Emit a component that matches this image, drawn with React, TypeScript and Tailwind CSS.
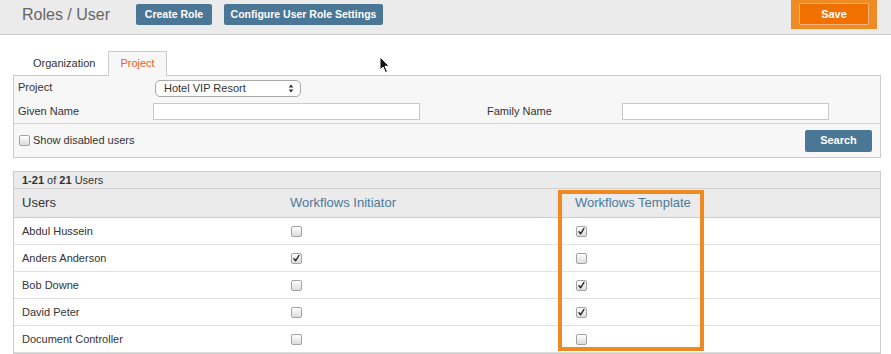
import React from "react";

function Box({ checked = false }: { checked?: boolean }) {
  return (
    <span className="relative inline-block w-[11px] h-[11px] rounded-[2px] border border-[#a3a3a3] bg-gradient-to-b from-[#ffffff] to-[#dcdcdc] shadow-[inset_0_1px_0_#fff]">
      {checked && (
        <svg viewBox="0 0 11 11" className="absolute left-[-1px] top-[-1px] w-[11px] h-[11px]">
          <path d="M3 5.8 L4.6 7.8 L8 2.4" fill="none" stroke="#2a2a2a" strokeWidth="1.4" strokeLinecap="round" strokeLinejoin="round" />
        </svg>
      )}
    </span>
  );
}

const rows: { name: string; init: boolean; tmpl: boolean }[] = [
  { name: "Abdul Hussein", init: false, tmpl: true },
  { name: "Anders Anderson", init: true, tmpl: false },
  { name: "Bob Downe", init: false, tmpl: true },
  { name: "David Peter", init: false, tmpl: true },
  { name: "Document Controller", init: false, tmpl: false },
];

export default function App() {
  return (
    <div
      className="relative w-[891px] h-[354px] overflow-hidden bg-white text-[#333]"
      style={{ fontFamily: '"Liberation Sans", Arial, Helvetica, sans-serif' }}
    >
      {/* Header */}
      <div className="h-[35px] border-b border-[#cfcfcf] bg-[#ebebeb] flex items-start">
        <div className="w-[136px] pl-[22px] pt-[5px] text-[16px] leading-[19px] text-[#666]">Roles / User</div>
        <div className="mt-[4px] w-[76px] h-[21px] rounded-[2px] bg-[#4b7797] text-white text-[10.5px] font-bold flex items-center justify-center">
          Create Role
        </div>
        <div className="ml-[12px] mt-[4px] w-[159px] h-[21px] rounded-[2px] bg-[#4b7797] text-white text-[10.5px] font-bold flex items-center justify-center">
          Configure User Role Settings
        </div>
        <div className="ml-auto mr-[14px] w-[86px] h-[29px] bg-[#f08a22] flex items-center justify-center">
          <div className="w-[70px] h-[22px] mt-[-1px] rounded-[2px] border border-[#f6b47a] bg-[#f07000] text-white text-[11px] font-bold flex items-center justify-center">
            Save
          </div>
        </div>
      </div>

      {/* Tabs */}
      <div className="flex items-end pl-[22px] pt-[16px] gap-[2px]">
        <div className="h-[24px] px-[11px] flex items-center text-[11px] text-[#333]">Organization</div>
        <div className="relative z-10 -mb-px h-[25px] px-[11px] pb-px flex items-center border border-b-0 border-[#cccccc] bg-[#f7f7f7] text-[11px] text-[#f0592a]">
          Project
        </div>
      </div>

      {/* Filter panel */}
      <div className="ml-[13px] w-[868px] border border-[#cccccc] bg-[#f7f7f7] text-[11px]">
        <div className="h-[23px] flex items-center pl-[4px]">
          <div className="w-[136px]">Project</div>
          <div className="ml-[1px] w-[146px] h-[17px] mt-[1px] rounded-[5px] border border-[#a9a9a9] bg-white flex items-center pl-[8px] pr-[6px]">
            <span className="flex-1">Hotel VIP Resort</span>
            <svg viewBox="0 0 6 10" className="w-[6px] h-[9px]">
              <path d="M3 0.5 L5.6 4 L0.4 4 Z M3 9.5 L5.6 6 L0.4 6 Z" fill="#333" />
            </svg>
          </div>
        </div>
        <div className="h-[24px] flex items-center pl-[4px]">
          <div className="w-[135px]">Given Name</div>
          <div className="w-[267px] h-[17px] border border-[#c9c9c9] bg-white" />
          <div className="ml-[67px] w-[135px]">Family Name</div>
          <div className="w-[207px] h-[17px] border border-[#c9c9c9] bg-white" />
        </div>
        <div className="h-[34px] border-t border-[#d4d4d4] flex items-center pl-[5px] pr-[8px]">
          <Box />
          <span className="ml-[3px]">Show disabled users</span>
          <div className="ml-auto w-[67px] h-[22px] rounded-[2px] bg-[#4b7797] text-white text-[11px] font-bold flex items-center justify-center">
            Search
          </div>
        </div>
      </div>

      {/* Table */}
      <div className="mt-[13px] ml-[13px] w-[868px] border border-[#cccccc]">
        <div className="h-[17px] border-b border-[#d0d0d0] bg-[#ebebeb] flex items-center pl-[8px] text-[11px]">
          <span className="font-bold">1-21</span>
          <span>&nbsp;of&nbsp;</span>
          <span className="font-bold">21</span>
          <span>&nbsp;Users</span>
        </div>
        <div className="h-[29px] border-b border-[#cccccc] bg-[#ebebeb] flex items-center text-[13px]">
          <div className="w-[267px] pl-[8px] text-[#333]">Users</div>
          <div className="w-[285px] pl-[9px] text-[#4a7a9b]">Workflows Initiator</div>
          <div className="flex-1 pl-[9px] text-[#4a7a9b]">Workflows Template</div>
        </div>
        {rows.map((r) => (
          <div key={r.name} className="h-[27px] border-b border-[#e0e0e0] flex items-center text-[11px]">
            <div className="w-[267px] pl-[8px]">{r.name}</div>
            <div className="w-[285px] pl-[10px] flex items-center">
              <Box checked={r.init} />
            </div>
            <div className="flex-1 pl-[10px] flex items-center">
              <Box checked={r.tmpl} />
            </div>
          </div>
        ))}
      </div>

      {/* Highlight overlay */}
      <div className="absolute left-[558px] top-[190px] w-[146px] h-[161px] border-[4px] border-[#ef8a21] pointer-events-none" />

      {/* Mouse cursor */}
      <svg viewBox="0 0 12 18" className="absolute left-[379px] top-[56px] w-[12px] h-[18px]">
        <path d="M1 1 L1 14 L4 11 L6.5 16.5 L8.5 15.6 L6 10.2 L10.2 10.2 Z" fill="#111" stroke="#fff" strokeWidth="1" strokeLinejoin="round" />
      </svg>
    </div>
  );
}
